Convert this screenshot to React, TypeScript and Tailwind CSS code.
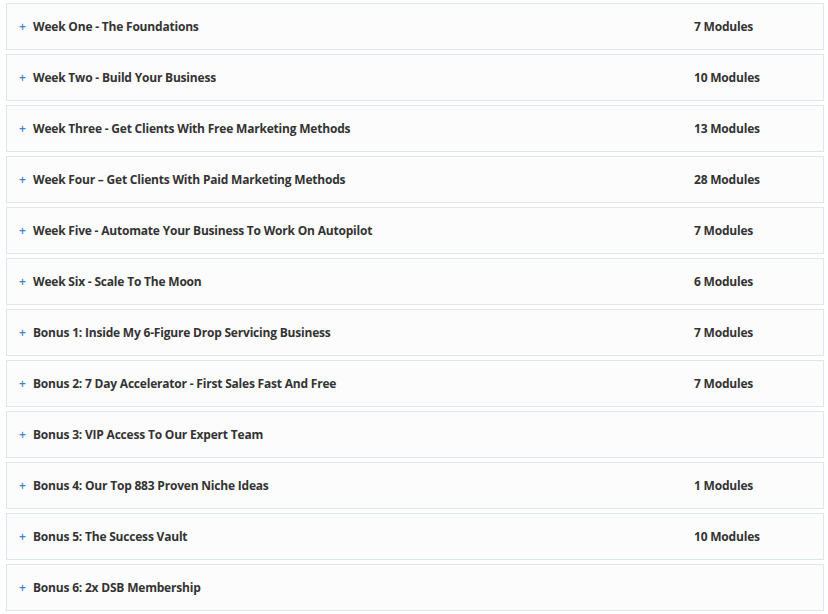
const weeks = [
  { title: "Week One - The Foundations", modules: "7 Modules" },
  { title: "Week Two - Build Your Business", modules: "10 Modules" },
  { title: "Week Three - Get Clients With Free Marketing Methods", modules: "13 Modules" },
  { title: "Week Four – Get Clients With Paid Marketing Methods", modules: "28 Modules" },
  { title: "Week Five - Automate Your Business To Work On Autopilot", modules: "7 Modules" },
  { title: "Week Six - Scale To The Moon", modules: "6 Modules" },
  { title: "Bonus 1: Inside My 6-Figure Drop Servicing Business", modules: "7 Modules" },
  { title: "Bonus 2: 7 Day Accelerator - First Sales Fast And Free", modules: "7 Modules" },
  { title: "Bonus 3: VIP Access To Our Expert Team", modules: "" },
  { title: "Bonus 4: Our Top 883 Proven Niche Ideas", modules: "1 Modules" },
  { title: "Bonus 5: The Success Vault", modules: "10 Modules" },
  { title: "Bonus 6: 2x DSB Membership", modules: "" },
];

export default function App() {
  return (
    <div
      className="bg-white min-h-[614px] pt-[3px] pl-[6px] pr-[4px]"
      style={{ fontFamily: '"Open Sans", sans-serif' }}
    >
      <div className="flex flex-col gap-[4px]">
        {weeks.map((w) => (
          <div
            key={w.title}
            className="h-[47px] flex items-center border border-[#dfe5ec] bg-[#fcfcfc] pl-[12px]"
          >
            <span className="text-[#3d7fd0] text-[12px] font-semibold w-[14px]">+</span>
            <span className="flex-1 text-[12px] tracking-[-0.2px] font-bold text-[#333]">
              {w.title}
            </span>
            <span className="w-[129px] text-[12px] tracking-[-0.2px] font-bold text-[#333]">
              {w.modules}
            </span>
          </div>
        ))}
      </div>
    </div>
  );
}
